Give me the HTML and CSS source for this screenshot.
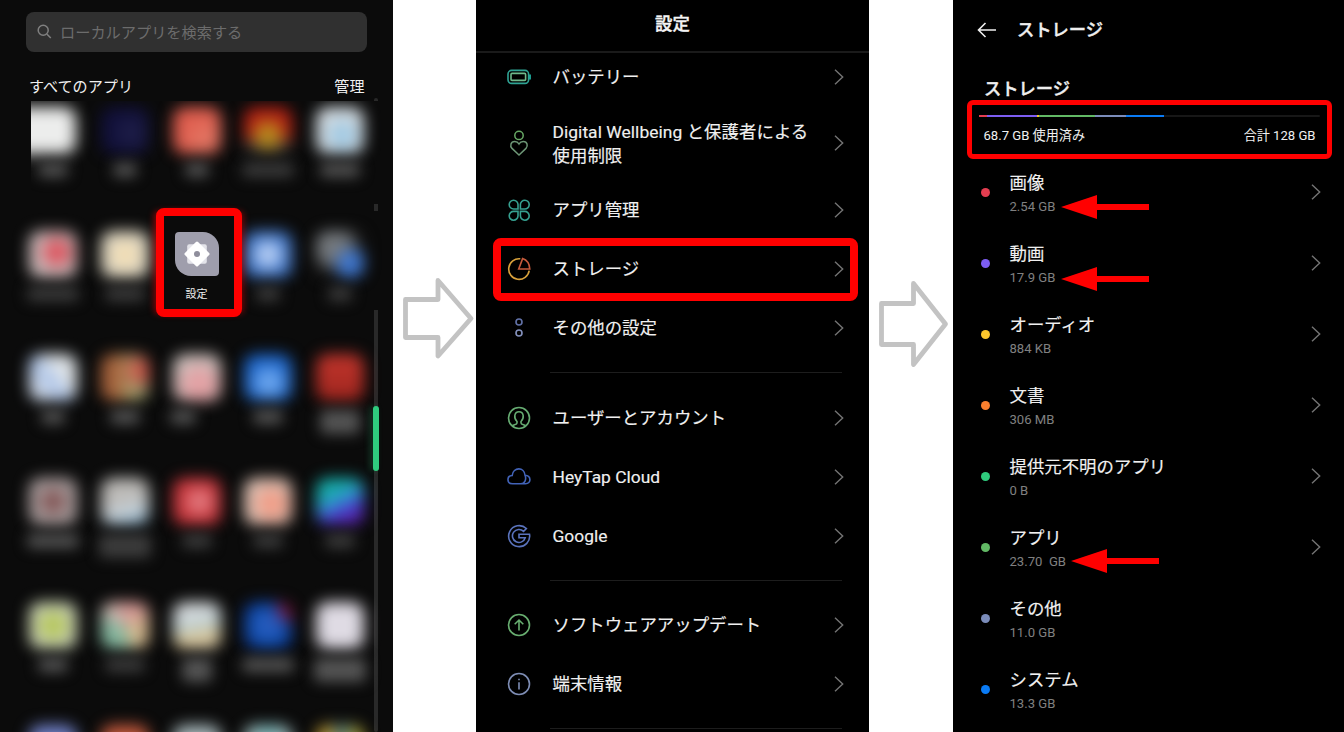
FILE: index.html
```html
<!DOCTYPE html>
<html lang="ja">
<head>
    <meta charset="UTF-8">
    <meta name="viewport" content="width=device-width, initial-scale=1.0">
    <title>ストレージ</title>
    <link rel="stylesheet" href="styles.css">
</head>
<body>
    <svg width="0" height="0" class="defs">
        <symbol id="chevron" viewBox="0 0 10 16"><path d="M1 .8 8.7 8 1 15.2" fill="none" stroke="#747474" stroke-width="1.4"/></symbol>
        <symbol id="pointer" viewBox="0 0 88 24"><path d="M0 12 36 0V9H88V15H36V24Z" fill="#f00"/></symbol>
    </svg>

    <!-- app drawer -->
    <div class="phone drawer">
        <div class="search">
            <svg width="15" height="15" viewBox="0 0 15 15" fill="none" stroke="#808080" stroke-width="1.5"><circle cx="6.2" cy="6.3" r="5"/><path d="M10 10.2 13.8 14"/></svg>
            <span>ローカルアプリを検索する</span>
        </div>
        <div class="drawer-head"><span>すべてのアプリ</span><span>管理</span></div>
        <div class="track"></div>
        <div class="thumb"></div>
        <div class="apps">
            <div class="app-row first">
                <div class="app"><i class="icon white"></i><i class="label"></i></div>
                <div class="app"><i class="icon navy"></i><i class="label small"></i></div>
                <div class="app"><i class="icon coral"></i><i class="label small"></i></div>
                <div class="app"><i class="icon flame"></i><i class="label wide dim"></i></div>
                <div class="app"><i class="icon sky"></i><i class="label mid"></i></div>
            </div>
            <div class="app-row second">
                <div class="app"><i class="icon redspot"></i><i class="label wide dim"></i></div>
                <div class="app"><i class="icon cream"></i><i class="label mid dim"></i></div>
                <div class="app">
                    <div class="picked">
                        <svg width="44" height="44" viewBox="0 0 44 44">
                            <path d="M4 0H28A16 16 0 0 1 44 16V40A4 4 0 0 1 40 44H16A16 16 0 0 1 0 28V4A4 4 0 0 1 4 0Z" fill="#9f9eac"/>
                            <rect x="12.2" y="12.2" width="19.6" height="19.6" rx="2" fill="#e4e4ea"/>
                            <rect x="12.7" y="12.7" width="18.6" height="18.6" rx="1.5" fill="#fff" transform="rotate(45 22 22)"/>
                            <circle cx="22" cy="22" r="3" fill="#8f8e9c"/>
                        </svg>
                        <span>設定</span>
                    </div>
                </div>
                <div class="app"><i class="icon bluespot"></i><i class="label small dim"></i></div>
                <div class="app"><i class="icon duo"></i><i class="label small dim"></i></div>
            </div>
            <div class="app-row">
                <div class="app"><i class="icon paleblue"></i><i class="label small"></i></div>
                <div class="app"><i class="icon olive"></i><i class="label"></i></div>
                <div class="app"><i class="icon pink"></i><i class="label left"></i></div>
                <div class="app"><i class="icon blue"></i><i class="label"></i></div>
                <div class="app"><i class="icon red"></i><i class="label mid tall"></i></div>
            </div>
            <div class="app-row">
                <div class="app"><i class="icon maroon"></i><i class="label wide"></i></div>
                <div class="app"><i class="icon silver"></i><i class="label wide tall dim"></i></div>
                <div class="app"><i class="icon crimson"></i><i class="label dim"></i></div>
                <div class="app"><i class="icon peach"></i><i class="label dim"></i></div>
                <div class="app"><i class="icon violet"></i><i class="label dim"></i></div>
            </div>
            <div class="app-row">
                <div class="app"><i class="icon lime"></i><i class="label"></i></div>
                <div class="app"><i class="icon mix"></i><i class="label mid dim"></i></div>
                <div class="app"><i class="icon sand"></i><i class="label tall"></i></div>
                <div class="app"><i class="icon royal"></i><i class="label wide"></i></div>
                <div class="app"><i class="icon lilac"></i><i class="label wide tall"></i></div>
            </div>
            <div class="app-row">
                <div class="app"><i class="icon indigo"></i></div>
                <div class="app"><i class="icon brick"></i></div>
                <div class="app"><i class="icon frost"></i></div>
                <div class="app"><i class="icon mint"></i></div>
                <div class="app"><i class="icon gold"></i></div>
            </div>
        </div>
    </div>

    <div class="step">
        <svg width="83" height="732" viewBox="393 0 83 732"><path d="M405.5 299.5H438V280.5L471 318.5 438 356V337.5H405.5Z"/></svg>
    </div>

    <!-- settings -->
    <div class="phone settings">
        <h1>設定</h1>
        <div class="list">
            <div class="row">
                <svg class="ico" viewBox="0 0 24 24" fill="none" stroke-width="1.6"><rect x="1" y="5.4" width="20.6" height="13" rx="3.6" stroke="#2fa394"/><rect x="4" y="8.4" width="14.6" height="7" rx="1" stroke="#6eb98c"/><path d="M23 9.5V14.5" stroke="#1faea0" stroke-width="1.8"/></svg>
                <span>バッテリー</span><svg class="chev"><use href="#chevron"/></svg>
            </div>
            <div class="row two">
                <svg class="ico" viewBox="0 0 24 24" fill="none" stroke-width="1.5"><circle cx="12" cy="4.4" r="4.2" stroke="#68a965"/><path d="M12 24 5 17.4A4.4 4.4 0 0 1 4 13C5 9.8 10 9.4 12 13 14 9.4 19 9.8 20 13A4.4 4.4 0 0 1 19 17.4Z" stroke="#6d9676"/></svg>
                <span>Digital Wellbeing と保護者による<br>使用制限</span><svg class="chev"><use href="#chevron"/></svg>
            </div>
            <div class="row">
                <svg class="ico" viewBox="0 0 24 24" fill="none" stroke="#36a090" stroke-width="1.6"><path d="M11 11H6.7A4.4 4.4 0 1 1 11 6.6ZM13.4 11H17.6A4.4 4.4 0 1 0 13.4 6.6ZM11 13.4H6.7A4.4 4.4 0 1 0 11 17.8ZM13.4 13.4H17.6A4.4 4.4 0 1 1 13.4 17.8Z"/></svg>
                <span>アプリ管理</span><svg class="chev"><use href="#chevron"/></svg>
            </div>
            <div class="row">
                <svg class="ico" viewBox="0 0 24 24" fill="none" stroke-width="1.6"><path d="M13.3 1.8A10.3 10.3 0 1 0 22.2 13.6" stroke="#d9a23c"/><path d="M15.6 1.6 11.7 12H22.8C22.5 7.2 20 3.1 15.6 1.6Z" stroke="#c65a3c"/></svg>
                <span>ストレージ</span><svg class="chev"><use href="#chevron"/></svg>
                <div class="mark"></div>
            </div>
            <div class="row">
                <svg class="ico" viewBox="0 0 24 24" fill="none" stroke-width="1.6"><circle cx="12" cy="6" r="3" stroke="#6272a8"/><circle cx="12" cy="17" r="3" stroke="#8491bd"/></svg>
                <span>その他の設定</span><svg class="chev"><use href="#chevron"/></svg>
            </div>
            <hr>
            <div class="row">
                <svg class="ico" viewBox="0 0 24 24" fill="none" stroke="#66ac72" stroke-width="1.6"><circle cx="12" cy="12" r="10.5"/><path d="M5.5 19.5C7 18.5 10 18.6 10 17V15.5C6.6 12.5 7 5.7 12 5.7S17.4 12.5 14 15.5V17C14 18.6 17 18.5 18.5 19.5"/></svg>
                <span>ユーザーとアカウント</span><svg class="chev"><use href="#chevron"/></svg>
            </div>
            <div class="row">
                <svg class="ico" viewBox="0 0 24 24" fill="none" stroke="#4263b8" stroke-width="1.6"><path d="M5.6 18.8C-.6 18.6-.4 10.7 5.2 10.5 6 1.7 17.6 1.7 18 10.3 19.8 14.5 17.5 18.8 14 18.8ZM14 18.8H18.5C24.4 18.8 24.6 10.8 18 10.3"/></svg>
                <span>HeyTap Cloud</span><svg class="chev"><use href="#chevron"/></svg>
            </div>
            <div class="row">
                <svg class="ico" viewBox="0 0 24 24" fill="none" stroke="#5a73bd" stroke-width="1.6"><path d="M19.4 4.5A10.5 10.5 0 1 0 22.5 10.2H12V13.7H18.2A6.5 6.5 0 1 1 16.6 7.4Z"/></svg>
                <span>Google</span><svg class="chev"><use href="#chevron"/></svg>
            </div>
            <hr>
            <div class="row">
                <svg class="ico" viewBox="0 0 24 24" fill="none" stroke="#68ae70" stroke-width="1.6"><circle cx="12" cy="12" r="10.5"/><path d="M12 17.5V7.3M7.7 11.2 12 7 16.3 11.2"/></svg>
                <span>ソフトウェアアップデート</span><svg class="chev"><use href="#chevron"/></svg>
            </div>
            <div class="row">
                <svg class="ico" viewBox="0 0 24 24" fill="none" stroke="#7e8db4" stroke-width="1.6"><circle cx="12" cy="12" r="10.5"/><path d="M12 10.3V17.5M12 6.8V8.3"/></svg>
                <span>端末情報</span><svg class="chev"><use href="#chevron"/></svg>
            </div>
            <hr>
        </div>
    </div>

    <div class="step">
        <svg width="84" height="732" viewBox="869 0 84 732"><path d="M881.5 303.5H913.5V283.5L945.5 324 913.5 364.5V344.5H881.5Z"/></svg>
    </div>

    <!-- storage -->
    <div class="phone storage">
        <div class="bar-top">
            <svg width="20" height="16" viewBox="0 0 20 16" fill="none" stroke="#eee" stroke-width="1.6"><path d="M8.5 1 1.5 8 8.5 15M1.5 8H19"/></svg>
            <h2>ストレージ</h2>
        </div>
        <h2 class="section">ストレージ</h2>
        <div class="summary">
            <div class="meter">
                <i class="seg images"></i><i class="seg video"></i><i class="seg audio"></i><i class="seg app-data"></i><i class="seg other"></i><i class="seg system"></i>
            </div>
            <div class="totals"><span>68.7 GB 使用済み</span><span>合計 128 GB</span></div>
        </div>
        <div class="types">
            <div class="type"><i class="dot images"></i><div><p>画像</p><small>2.54 GB<svg class="ptr"><use href="#pointer"/></svg></small></div><svg class="chev"><use href="#chevron"/></svg></div>
            <div class="type"><i class="dot video"></i><div><p>動画</p><small>17.9 GB<svg class="ptr low"><use href="#pointer"/></svg></small></div><svg class="chev"><use href="#chevron"/></svg></div>
            <div class="type"><i class="dot audio"></i><div><p>オーディオ</p><small>884 KB</small></div><svg class="chev"><use href="#chevron"/></svg></div>
            <div class="type"><i class="dot docs"></i><div><p>文書</p><small>306 MB</small></div><svg class="chev"><use href="#chevron"/></svg></div>
            <div class="type"><i class="dot unknown"></i><div><p>提供元不明のアプリ</p><small>0 B</small></div><svg class="chev"><use href="#chevron"/></svg></div>
            <div class="type"><i class="dot app-data"></i><div><p>アプリ</p><small>23.70&nbsp; GB<svg class="ptr high"><use href="#pointer"/></svg></small></div><svg class="chev"><use href="#chevron"/></svg></div>
            <div class="type"><i class="dot other"></i><div><p>その他</p><small>11.0 GB</small></div></div>
            <div class="type"><i class="dot system"></i><div><p>システム</p><small>13.3 GB</small></div></div>
        </div>
    </div>
</body>
</html>
```
FILE: styles.css
```css
* {
    box-sizing: border-box;
}

body {
    margin: 0;
    width: 1344px;
    height: 732px;
    display: flex;
    background: #fff;
    overflow: hidden;
    font-family: Roboto, "Noto Sans CJK JP", sans-serif;
    color: #f0f0f0;
}

h1, h2, p {
    margin: 0;
}

.defs {
    position: absolute;
}

.phone {
    position: relative;
    width: 393px;
    height: 732px;
    flex: none;
    overflow: hidden;
    background: #000;
}

.step {
    flex: none;
}

.step svg {
    display: block;
    fill: none;
    stroke: #c3c3c3;
    stroke-width: 4.8;
    stroke-linejoin: round;
}

/* app drawer */
.drawer {
    background: #0b0b0b;
}

.search {
    display: flex;
    align-items: center;
    gap: 8px;
    height: 40px;
    margin: 12px 26px 0;
    padding: 0 0 1px 11px;
    border-radius: 8px;
    background: #303030;
    color: #6c6c6c;
    font-size: 15.2px;
}

.search span {
    margin-top: -1px;
}

.drawer-head {
    display: flex;
    justify-content: space-between;
    align-items: center;
    height: 49px;
    padding: 17px 28.5px 0 29px;
    font-size: 15.1px;
}

.track {
    position: absolute;
    left: 374px;
    top: 98px;
    width: 4px;
    height: 634px;
    border-radius: 2px;
    background: #292929;
}

.thumb {
    position: absolute;
    z-index: 1;
    left: 373px;
    top: 406px;
    width: 6px;
    height: 65px;
    border-radius: 3px;
    background: #2fcc7e;
    box-shadow: -3px 0 6px rgba(47, 204, 126, .25);
}

.apps {
    position: relative;
}

.app-row {
    display: grid;
    grid-template-columns: repeat(5, 44px);
    column-gap: 27.8px;
    height: 123.7px;
    padding: 6px 0 0 31px;
}

.app-row.first {
    height: 103px;
    margin: 0 12px 6.7px 31px;
    padding-left: 0;
    overflow: hidden;
    background: #0b0b0b;
}

/* this row covers the scroll track */
.app-row.second {
    height: 137.7px;
    padding-top: 20px;
    background: linear-gradient(#0b0b0b, #0b0b0b) 0 0 / 388px 99px no-repeat;
}

.app {
    position: relative;
    display: flex;
    flex-direction: column;
    align-items: center;
}

.icon {
    width: 48px;
    height: 47px;
    flex: none;
    border-radius: 12px;
    filter: blur(7.2px);
}

.first .white {
    width: 66px;
    margin-left: -20px;
}

.label {
    width: 30px;
    height: 14px;
    margin-top: 9px;
    border-radius: 5px;
    background: #545454;
    filter: blur(7px);
}

.label.small { width: 24px; }
.label.mid { width: 40px; }
.label.wide { width: 52px; }
.label.left { width: 26px; margin-right: 28px; }
.label.tall { height: 24px; }
.label.dim { background: #3c3c3c; }

.white { background: #ecedec; }
.navy { background: radial-gradient(circle at 65% 55%, #20204a, #11103a 60%); }
.coral { background: radial-gradient(circle at 70% 70%, #e37a67, #df5c4d 60%); }
.flame { background: radial-gradient(circle at 50% 60%, #b88a1c 0 25%, transparent 50%), linear-gradient(#b32015 70%, #3a3a3a 74%); }
.sky { background: radial-gradient(circle at 55% 60%, #9cc8e4 15%, #d4dbe0 55%); }
.redspot { background: radial-gradient(circle at 58% 45%, #df4a55 15%, #c9bcbc 55%); }
.cream { background: radial-gradient(circle, #f5dfb3 15%, #ddd6c4 60%); }
.bluespot { background: radial-gradient(circle, #c4d8f8 16%, #3f76ca 60%); }
.duo { background: radial-gradient(circle at 75% 72%, #3f76cc 0 28%, transparent 36%), radial-gradient(circle at 35% 30%, #74787c 35%, #151515 62%); }
.paleblue { background: linear-gradient(50deg, #cbd6e6 25%, #a9c2ea 45%, #dfe4e8 62%); }
.olive { background: radial-gradient(circle at 85% 35%, #cc5a4c 15%, transparent 40%), linear-gradient(90deg, #a5613b 30%, #a59a68 60%, #88936a); }
.pink { background: radial-gradient(circle at 55% 65%, #e3a1a4 30%, #ccc3bf 65%); }
.blue { background: radial-gradient(circle at 52% 60%, #74adf2 14%, #1a63c8 60%); }
.red { background: linear-gradient(#c2352c, #9f261f); }
.maroon { background: radial-gradient(circle, #7c4a4a 14%, #aaa0a0 55%); }
.silver { background: linear-gradient(165deg, #bdbbb8 45%, #c6d2da 70%, #6f9fc0); }
.crimson { background: radial-gradient(circle at 55% 50%, #e58388 12%, #c8343a 55%); }
.peach { background: radial-gradient(circle at 58% 55%, #f19c86 22%, #ddc3b6 60%); }
.violet { background: linear-gradient(155deg, #17aba8 30%, #3492d4 50%, #463dcb 65%, #5a25b0 80%); }
.lime { background: radial-gradient(ellipse, #b5c756 20%, #c8d0b4 60%); }
.mix { background: conic-gradient(#d79a96 12%, #d2b78d 25% 42%, #85b79f 50% 75%, #c2b8b0 85%, #d79a96); }
.sand { background: linear-gradient(170deg, #d4d8da 30%, #b9ced2 50%, #d9c492 70%, #cfc4ae); }
.royal { background: radial-gradient(circle at 95% 15%, #7a163e 14%, transparent 27%), radial-gradient(circle, #345fc4, #1555b4 45%, #0c3590 80%); }
.lilac { background: #dfdbe4; }
.indigo { background: #7181c8; }
.brick { background: #c65b3e; }
.frost { background: #a8b8bb; }
.mint { background: linear-gradient(90deg, #a9b8b8, #76b5b8, #a9b8b8); }
.gold { background: linear-gradient(90deg, #b79532 30%, #3c7590 50%, #a69b35 80%); }

.picked {
    position: absolute;
    z-index: 2;
    left: -19px;
    top: -22.7px;
    width: 86px;
    height: 109px;
    display: flex;
    flex-direction: column;
    align-items: center;
    padding: 16px 4px 0 0;
    border: 8px solid #f00;
    border-radius: 8px;
    background: #0b0b0b;
    box-shadow: -5px 0 6px -3px rgba(255, 0, 0, .5), 5px 0 6px -3px rgba(255, 0, 0, .4);
    font-size: 11px;
    line-height: 16px;
}

.picked span {
    margin-top: 11px;
}

/* settings */
.settings h1 {
    height: 53px;
    border-bottom: 2px solid #1a1a1a;
    font-size: 17.4px;
    font-weight: 500;
    line-height: 49px;
    text-align: center;
    color: #f4f4f4;
    -webkit-text-stroke: .4px #f4f4f4;
}

.list {
    margin-top: -5.6px;
}

.row {
    position: relative;
    display: flex;
    align-items: center;
    height: 59.2px;
    padding: 0 25.5px 0 30.5px;
    font-size: 17.4px;
    line-height: 24px;
    -webkit-text-stroke: .15px #f0f0f0;
}

.row.two {
    height: 73.8px;
    letter-spacing: .06px;
}

.row span {
    flex: 1;
    margin-left: 22px;
}

.row.two span {
    padding-top: 1px;
}

.ico {
    width: 24px;
    height: 24px;
    overflow: visible;
}

.chev {
    width: 10px;
    height: 16px;
    flex: none;
}

.mark {
    position: absolute;
    left: 16.5px;
    top: -1.6px;
    width: 365.5px;
    height: 63px;
    border: 8px solid #f00;
    border-radius: 8px;
}

hr {
    height: 1px;
    margin: 14px 27px 15px 74px;
    border: 0;
    background: #1d1d1d;
}

/* storage */
.storage {
    width: 391px;
}

.storage h2 {
    font-size: 17.3px;
    font-weight: 500;
    line-height: 24px;
    -webkit-text-stroke: .4px #eee;
}

.bar-top {
    display: flex;
    align-items: center;
    gap: 20px;
    padding: 18px 0 0 24px;
}

.storage .section {
    margin: 35px 0 0 31px;
}

.summary {
    width: 365px;
    height: 59px;
    margin: -1px 0 0 14px;
    padding: 10px 7px 0;
    border: 5px solid #f00;
    border-radius: 6px;
}

.meter {
    display: flex;
    height: 2px;
    border-radius: 1px;
    background: #171717;
}

.seg.images { width: 8px; }
.seg.video { width: 50px; }
.seg.audio { width: 1.5px; }
.seg.app-data { width: 56.5px; }
.seg.other { width: 31px; }
.seg.system { width: 38px; }

.images { background: #e43d50; }
.video { background: #7d5df2; }
.audio { background: #fbc52c; }
.docs { background: #fa7f2e; }
.unknown { background: #2fcb7d; }
.app-data { background: #62b965; }
.other { background: #7b8cba; }
.system { background: #0a7bf5; }

.totals {
    display: flex;
    justify-content: space-between;
    padding: 9px 4.5px 0 4.5px;
    font-size: 13.1px;
    line-height: 20px;
}

.types {
    padding-top: 6px;
}

.type {
    display: flex;
    align-items: center;
    height: 71px;
    padding: 0 23.5px 17px 28px;
}

.type div {
    flex: 1;
    margin: 5px 0 0 19.5px;
}

.dot {
    width: 9px;
    height: 9px;
    border-radius: 50%;
}

.type p {
    font-size: 17.4px;
    line-height: 24px;
    -webkit-text-stroke: .15px #f0f0f0;
}

.type small {
    display: flex;
    align-items: center;
    height: 24px;
    font-size: 13.1px;
    color: #808080;
}

.ptr {
    width: 88px;
    height: 24px;
    margin-left: 5.5px;
}

.ptr.low { margin-top: 2px; }
.ptr.high { margin-top: -2px; }
```
